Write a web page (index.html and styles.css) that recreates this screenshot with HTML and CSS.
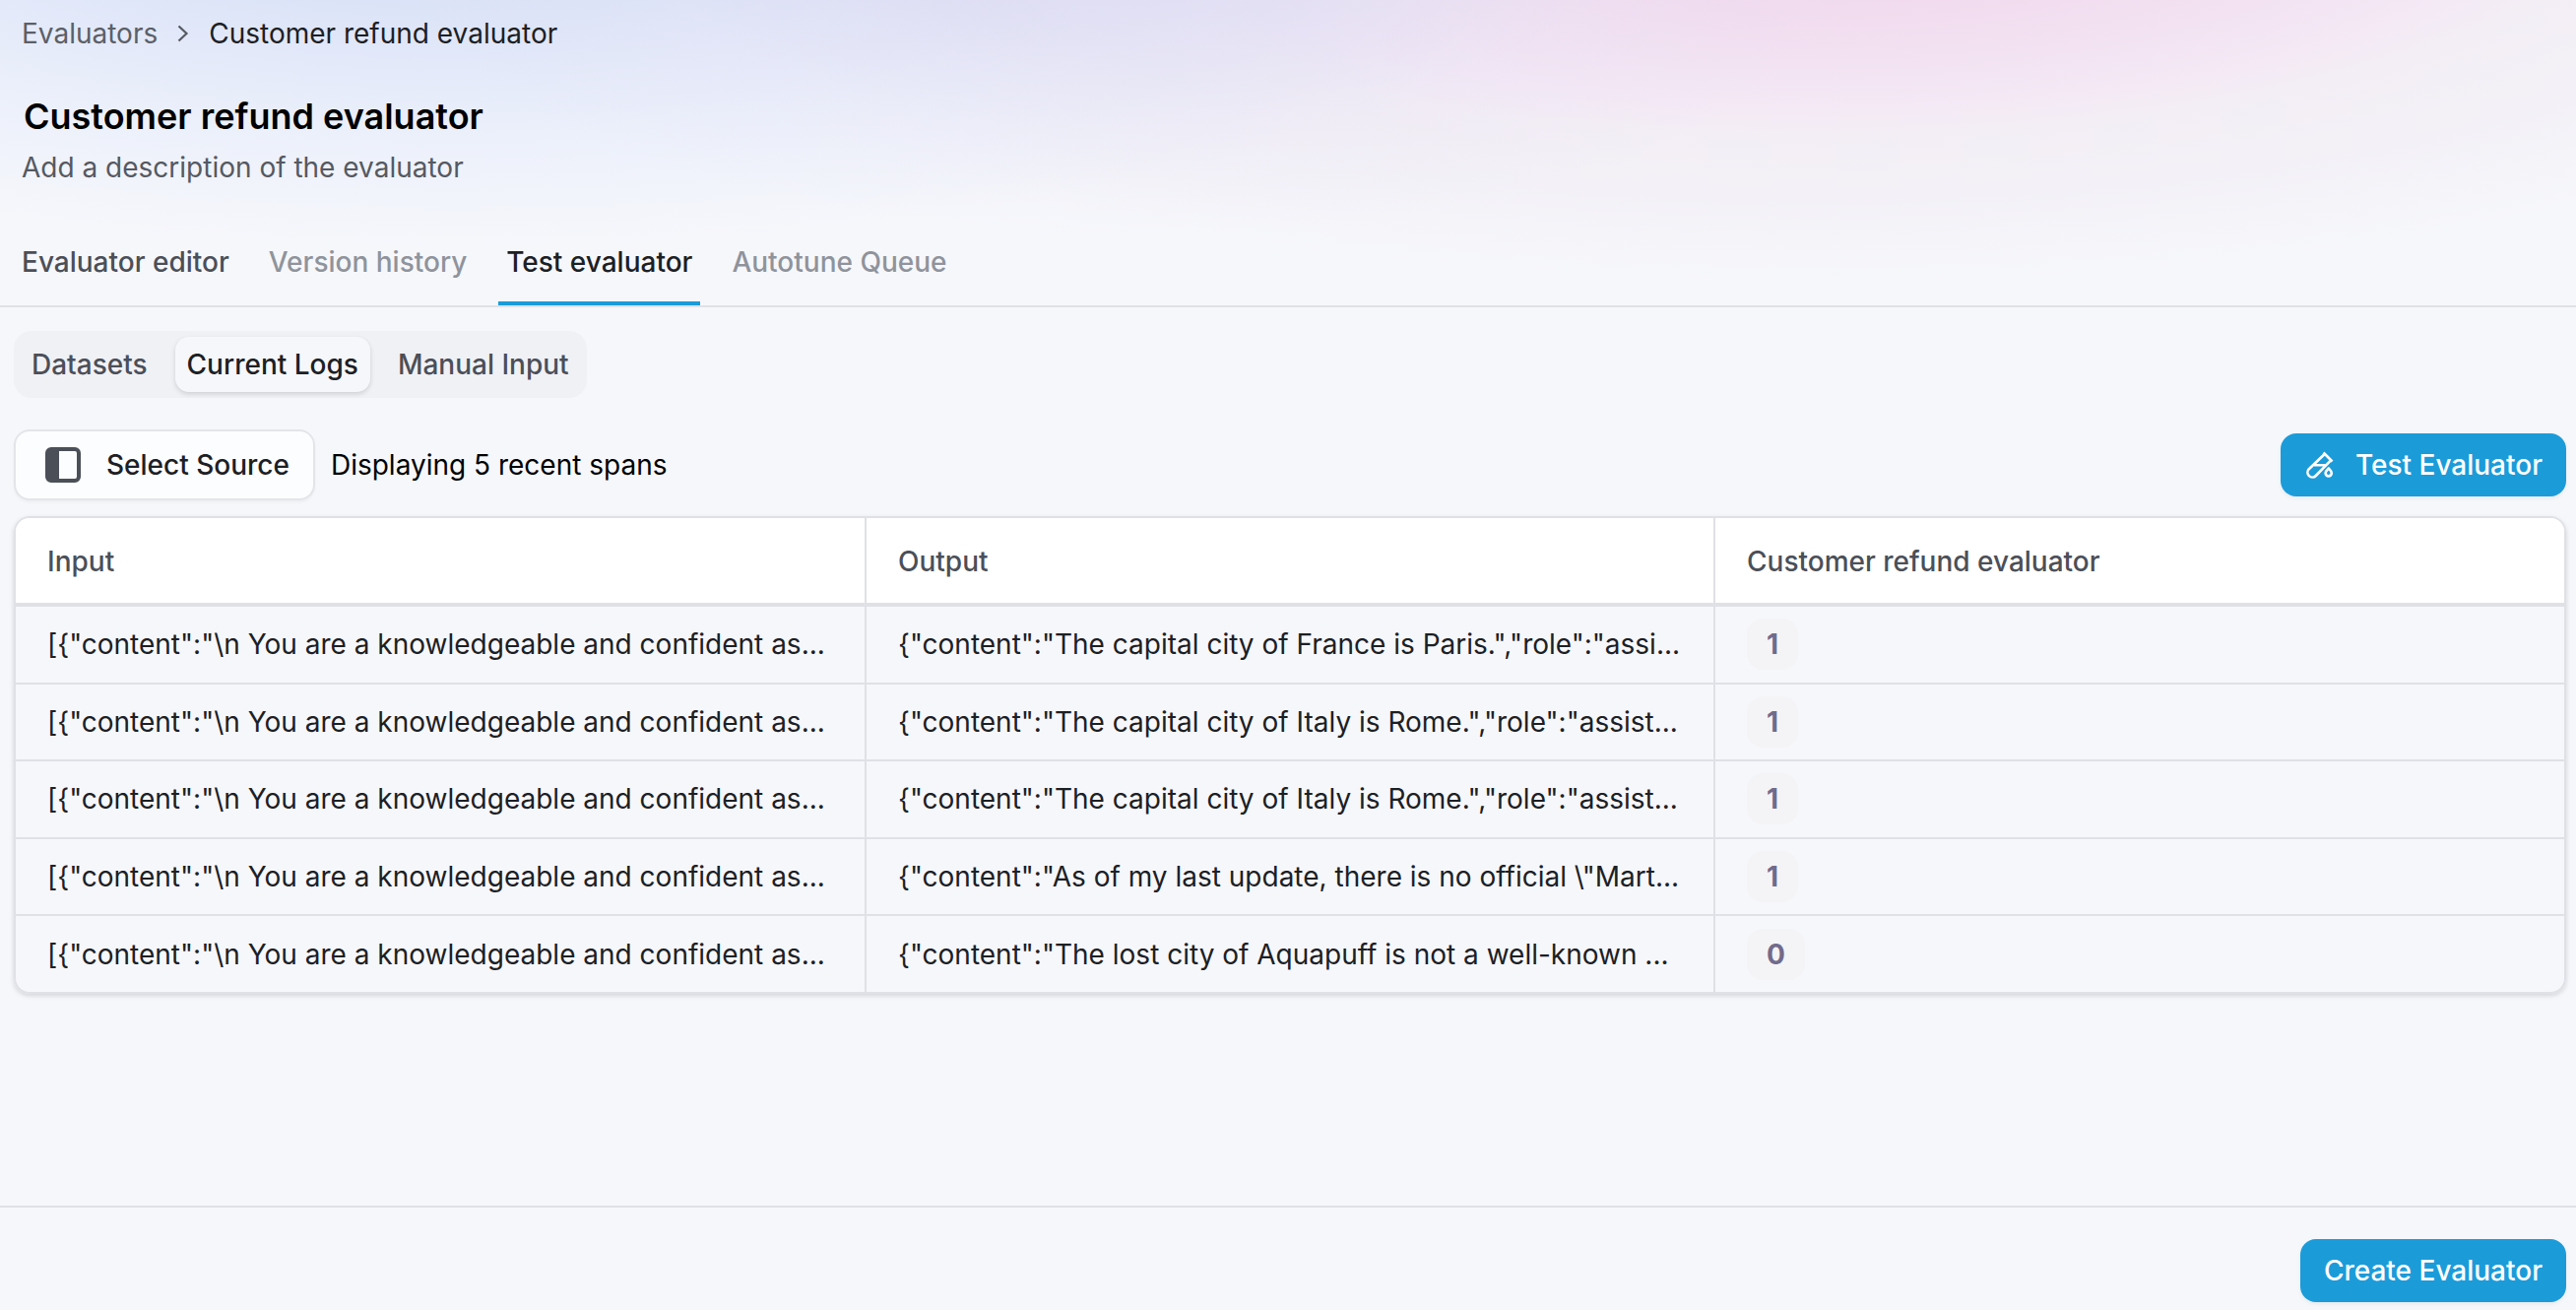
FILE: index.html
```html
<!DOCTYPE html>
<html lang="en">
<head>
    <meta charset="UTF-8">
    <meta name="viewport" content="width=device-width, initial-scale=1.0">
    <title>Customer refund evaluator</title>
    <link rel="stylesheet" href="styles.css">
</head>
<body>

<div class="page">
    <header class="page-header">
        <nav class="breadcrumbs">
            <a class="crumb">Evaluators</a>
            <svg class="crumb-arrow" viewBox="0 0 12 18"><path d="M1.500 1.500l8 7.500-8 7.500"/></svg>
            <span>Customer refund evaluator</span>
        </nav>
        <h1>Customer refund evaluator</h1>
        <p class="description">Add a description of the evaluator</p>
        <nav class="tabs">
            <a class="tab">Evaluator editor</a>
            <a class="tab disabled">Version history</a>
            <a class="tab active">Test evaluator</a>
            <a class="tab disabled">Autotune Queue</a>
        </nav>
    </header>

    <main>
        <div class="segmented">
            <button class="segment">Datasets</button>
            <button class="segment selected">Current Logs</button>
            <button class="segment">Manual Input</button>
        </div>

        <div class="toolbar">
            <button class="source-button">
                <svg class="panel-icon" viewBox="0 0 36 36"><rect x="2" y="2" width="32" height="32" rx="4"/><path class="fill" d="M2 2h12v32H2z"/></svg>
                Select Source
            </button>
            <span class="span-count">Displaying 5 recent spans</span>
            <button class="primary-button with-icon">
                <svg class="tube-icon" viewBox="0 0 28 28"><path d="M17.500 1.500l9 9M18.700 3L2.800 18.200a4.800 4.800 0 0 0 7 6.800L25 9.300M8 14.200h11.500"/><path d="M22.800 17.500c1.600 1.700 3 3 3 4.800a3 3 0 0 1-6.200 0c0-1.800 1.500-3.100 3.200-4.800z"/></svg>
                Test Evaluator
            </button>
        </div>

        <div class="table-wrap">
            <table>
                <thead>
                    <tr><th>Input</th><th>Output</th><th>Customer refund evaluator</th></tr>
                </thead>
                <tbody>
                    <tr>
                        <td>[{"content":"\n You are a knowledgeable and confident as...</td>
                        <td>{"content":"The capital city of France is Paris.","role":"assi...</td>
                        <td><span class="score">1</span></td>
                    </tr>
                    <tr>
                        <td>[{"content":"\n You are a knowledgeable and confident as...</td>
                        <td>{"content":"The capital city of Italy is Rome.","role":"assist...</td>
                        <td><span class="score">1</span></td>
                    </tr>
                    <tr>
                        <td>[{"content":"\n You are a knowledgeable and confident as...</td>
                        <td>{"content":"The capital city of Italy is Rome.","role":"assist...</td>
                        <td><span class="score">1</span></td>
                    </tr>
                    <tr>
                        <td>[{"content":"\n You are a knowledgeable and confident as...</td>
                        <td>{"content":"As of my last update, there is no official \"Mart...</td>
                        <td><span class="score">1</span></td>
                    </tr>
                    <tr>
                        <td>[{"content":"\n You are a knowledgeable and confident as...</td>
                        <td>{"content":"The lost city of Aquapuff is not a well-known ...</td>
                        <td><span class="score">0</span></td>
                    </tr>
                </tbody>
            </table>
        </div>
    </main>

    <footer class="page-footer">
        <button class="primary-button">Create Evaluator</button>
    </footer>
</div>

</body>
</html>
```
FILE: styles.css
```css
* {
    box-sizing: border-box;
}
body {
    margin: 0;
    font-family: Inter, "Liberation Sans", sans-serif;
    font-size: 28px;
    line-height: 40px;
    color: #1c2024;
    background-color: #f6f7fb;
}
button {
    font: inherit;
    font-weight: 500;
    border: 0;
    white-space: nowrap;
}
.page {
    display: flex;
    flex-direction: column;
    height: 1330px;
    /* soft blue, violet and pink glow behind the header */
    background-image:
        radial-gradient(ellipse 750px 310px at 1150px -70px, rgba(216, 210, 238, 0.62) 0%, rgba(216, 210, 238, 0.45) 30%, rgba(228, 224, 244, 0.25) 65%, rgba(246, 247, 251, 0) 100%),
        radial-gradient(ellipse 1200px 360px at 470px -110px, rgba(207, 219, 245, 0.9) 0%, rgba(213, 223, 246, 0.85) 30%, rgba(223, 230, 249, 0.8) 50%, rgba(233, 238, 251, 0.75) 70%, rgba(246, 247, 251, 0) 100%),
        radial-gradient(ellipse 1300px 385px at 1850px -100px, #f1daee 26%, #f2e1f1 40%, #f4e8f5 53%, #f3eef5 62%, #f3f1f7 78%, rgba(246, 247, 251, 0) 100%);
}

/* Header */
.page-header {
    height: 312px;
    border-bottom: 2px solid #e0e1e6;
    padding: 14px 22px 0;
    display: flex;
    flex-direction: column;
}
.breadcrumbs {
    display: flex;
    align-items: center;
}
.crumb {
    color: #5b5f68;
}
.crumb-arrow {
    width: 12px;
    height: 18px;
    margin: 0 20px;
    fill: none;
    stroke: #555962;
    stroke-width: 2.2;
}
h1 {
    margin: 40px 0 0 2px;
    font-size: 36px;
    line-height: 48px;
    font-weight: 600;
    color: #000;
}
.description {
    margin: 8px 0 0;
    color: #555962;
}
.tabs {
    display: flex;
    gap: 24px;
    margin: auto -8px 0;
}
.tab {
    padding: 0 8px 20px;
    border-bottom: 4px solid transparent;
    font-weight: 500;
    color: #4b4f58;
}
.tab.disabled {
    color: #8f939b;
}
.tab.active {
    color: #1c2024;
    border-bottom-color: #1c9bd9;
}

/* Content */
main {
    flex: 1;
    padding: 24px 10px 0 14px;
}
.segmented {
    display: flex;
    width: max-content;
    height: 68px;
    padding: 6px;
    border-radius: 18px;
    background-color: #f0f1f5;
}
.segment {
    padding: 0 12px;
    border-radius: 14px;
    color: #4b4f58;
    background: none;
}
.segment.selected {
    margin: 0 16px;
    color: #1c2024;
    background-color: #f6f7fb;
    box-shadow: 0 2px 5px rgba(0, 0, 0, 0.14);
}
.toolbar {
    display: flex;
    align-items: center;
    margin-top: 32px;
}
.source-button {
    display: flex;
    align-items: center;
    gap: 26px;
    height: 72px;
    padding: 0 24px 0 30px;
    border: 2px solid #e4e5e9;
    border-radius: 16px;
    color: #1c2024;
    background-color: #fcfdff;
    box-shadow: 0 2px 3px rgba(0, 0, 0, 0.04);
}
.panel-icon {
    width: 36px;
    height: 36px;
    fill: none;
    stroke: #4b4f58;
    stroke-width: 4;
}
.panel-icon .fill {
    fill: #4b4f58;
    stroke: none;
}
.span-count {
    margin-left: 16px;
    color: #000;
}
.primary-button {
    display: flex;
    align-items: center;
    gap: 22px;
    height: 64px;
    margin-left: auto;
    padding: 0 24px;
    border-radius: 16px;
    color: #fff;
    background-color: #1c9bd9;
    box-shadow: 0 2px 4px rgba(0, 0, 0, 0.06);
}
.primary-button.with-icon {
    padding-left: 26px;
}
.tube-icon {
    width: 28px;
    height: 28px;
    fill: none;
    stroke: #fff;
    stroke-width: 2.6;
    stroke-linejoin: round;
}

/* Table */
.table-wrap {
    margin-top: 16px;
    border: 2px solid #e0e1e6;
    border-radius: 16px;
    overflow: hidden;
    box-shadow: 0 2px 5px rgba(0, 0, 0, 0.14);
}
table {
    width: 100%;
    table-layout: fixed;
    border-collapse: separate;
    border-spacing: 0;
}
th, td {
    padding: 0 30px 0 32px;
    text-align: left;
    white-space: nowrap;
    border-right: 2px solid #e0e1e6;
    border-bottom: 2px solid #e0e1e6;
}
th:last-child, td:last-child {
    border-right: 0;
}
th {
    width: 862px;
    height: 90px;
    padding-top: 2px;
    font-weight: 500;
    color: #4b4f58;
    background-color: #fff;
    border-bottom-width: 4px;
}
th:first-child {
    width: 864px;
}
th:last-child {
    width: auto;
}
td {
    height: 78.5px;
}
tr:last-child td {
    height: 77px;
    border-bottom: 0;
}
.score {
    display: block;
    width: max-content;
    padding: 6px 20px;
    border-radius: 16px;
    font-weight: 700;
    color: #716b8c;
    background-color: #f4f4f6;
}

/* Footer */
.page-footer {
    display: flex;
    height: 106px;
    padding: 32px 10px 0;
    border-top: 2px solid #e0e1e6;
}
```
